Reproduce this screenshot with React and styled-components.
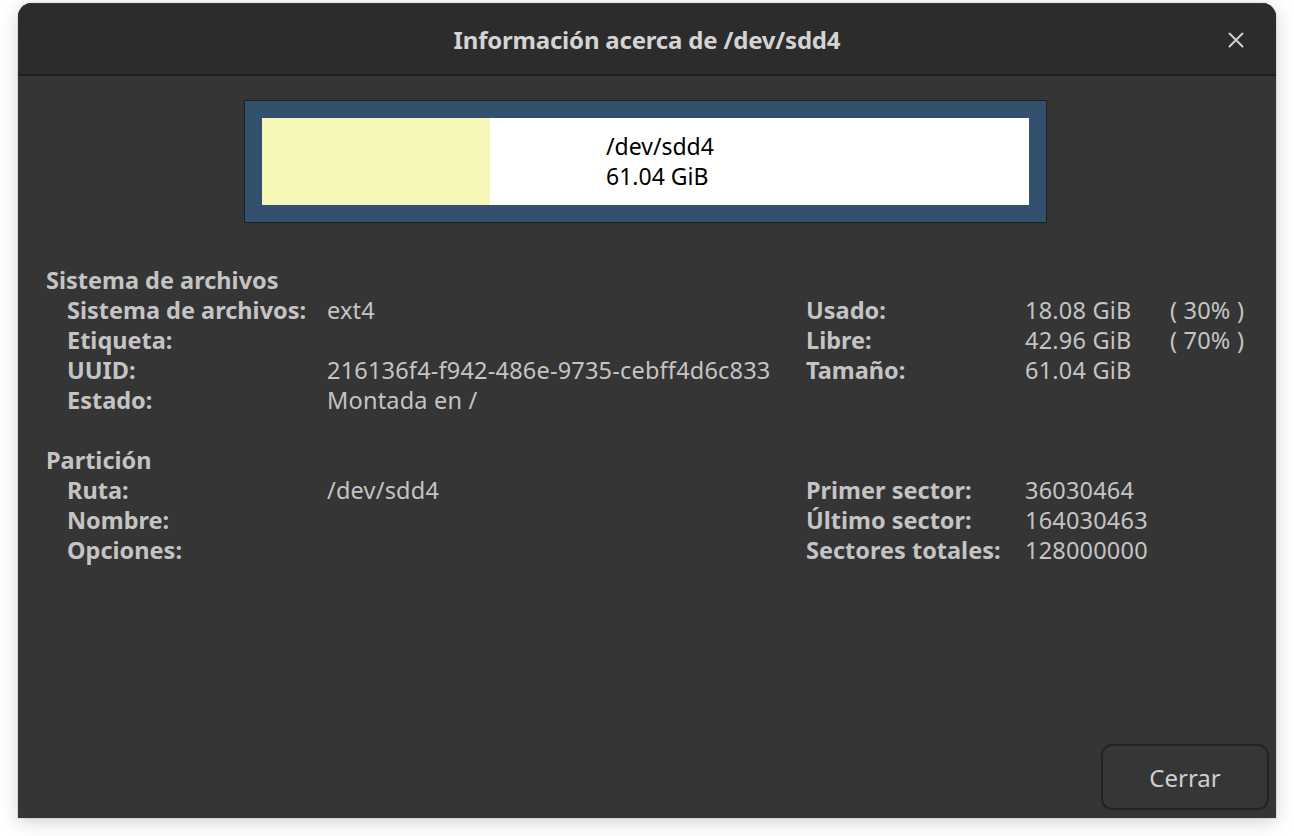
import styled, { createGlobalStyle } from "styled-components"

const Global = createGlobalStyle`
  html, body {
    margin: 0;
    padding: 0;
    background: #ffffff;
  }
  body {
    font-family: "Noto Sans", "Open Sans", sans-serif;
  }
`;

const Page = styled.div`
  width: 1294px;
  height: 836px;
  padding: 3px 18px 0 18px;
  box-sizing: border-box;
`;

const Window = styled.div`
  width: 1258px;
  height: 815px;
  background: #353535;
  border-radius: 14px 14px 0 0;
  box-shadow: 0 4px 18px rgba(0, 0, 0, 0.18), 0 0 0 1px rgba(0, 0, 0, 0.06);
  display: flex;
  flex-direction: column;
  overflow: hidden;
`;

const TitleBar = styled.header`
  flex-shrink: 0;
  background: #2c2c2c;
  border-top: 1px solid #3a3a3a;
  border-bottom: 2px solid #1f1f1f;
  box-sizing: border-box;
  height: 73px;
  display: flex;
  align-items: center;
  justify-content: center;
  position: relative;
`;

const Title = styled.h1`
  margin: 0;
  font-size: 24px;
  font-weight: 700;
  color: #d4d4d4;
  letter-spacing: -0.2px;
`;

const CloseButton = styled.button`
  position: absolute;
  right: 28px;
  top: 24px;
  width: 24px;
  height: 24px;
  padding: 0;
  border: none;
  background: transparent;
  display: flex;
  align-items: center;
  justify-content: center;
`;

const Body = styled.main`
  flex: 1;
  display: flex;
  flex-direction: column;
  padding: 24px 0 8px 0;
`;

const BarFrame = styled.div`
  align-self: center;
  width: 803px;
  height: 123px;
  box-sizing: border-box;
  margin-left: -3px;
  border: 1px solid #1f1f1f;
  background: #33506e;
  padding: 17px;
  display: flex;
`;

const Bar = styled.div`
  flex: 1;
  display: flex;
  background: #ffffff;
  position: relative;
`;

const Used = styled.div`
  width: ${(p) => p.$width}px;
  background: #f7f7b9;
`;

const BarLabel = styled.div`
  position: absolute;
  left: 344px;
  top: 13px;
  color: #000;
  font-family: "Noto Sans", sans-serif;
  font-size: 23px;
  line-height: 30px;
`;

const Section = styled.section`
  margin-top: ${(p) => p.$top}px;
  padding-left: 28px;
`;

const SectionTitle = styled.h2`
  margin: 0;
  font-size: 23.5px;
  font-weight: 700;
  color: #c4c4c4;
  line-height: 30px;
`;

const Grid = styled.div`
  display: grid;
  grid-template-columns: 260px 479px 219px 145px auto;
  padding-left: 21px;
  font-size: 23.5px;
  line-height: 30px;
  color: #c4c4c4;
`;

const Label = styled.div`
  font-weight: 700;
  white-space: nowrap;
`;

const Value = styled.div`
  font-weight: 400;
  white-space: nowrap;
  letter-spacing: 0.2px;
`;

const Footer = styled.div`
  margin-top: auto;
  display: flex;
  justify-content: flex-end;
  padding-right: 7px;
`;

const Button = styled.button`
  width: 168px;
  height: 66px;
  border-radius: 11px;
  border: 2px solid #232323;
  background: #363636;
  color: #cfcfcf;
  font-family: "Noto Sans", sans-serif;
  font-size: 24px;
`;

const fsRows = [
  ["Sistema de archivos:", "ext4", "Usado:", "18.08 GiB", "( 30% )"],
  ["Etiqueta:", "", "Libre:", "42.96 GiB", "( 70% )"],
  ["UUID:", "216136f4-f942-486e-9735-cebff4d6c833", "Tamaño:", "61.04 GiB", ""],
  ["Estado:", "Montada en /", "", "", ""],
];

const partRows = [
  ["Ruta:", "/dev/sdd4", "Primer sector:", "36030464", ""],
  ["Nombre:", "", "Último sector:", "164030463", ""],
  ["Opciones:", "", "Sectores totales:", "128000000", ""],
];

function InfoGrid({ rows }) {
  return (
    <Grid>
      {rows.map((r, i) => [
        <Label key={i + "a"}>{r[0]}</Label>,
        <Value key={i + "b"}>{r[1]}</Value>,
        <Label key={i + "c"}>{r[2]}</Label>,
        <Value key={i + "d"}>{r[3]}</Value>,
        <Value key={i + "e"}>{r[4]}</Value>,
      ])}
    </Grid>
  );
}

export default function App() {
  return (
    <Page>
      <Global />
      <Window>
        <TitleBar>
          <Title>Información acerca de /dev/sdd4</Title>
          <CloseButton type="button" aria-label="Cerrar">
            <svg width="16" height="16" viewBox="0 0 16 16">
              <path d="M1.5 1.5 L14.5 14.5 M14.5 1.5 L1.5 14.5" stroke="#cfcfcf" strokeWidth="2" strokeLinecap="round" />
            </svg>
          </CloseButton>
        </TitleBar>
        <Body>
          <BarFrame>
            <Bar>
              <Used $width={228} />
              <BarLabel>
                /dev/sdd4
                <br />
                61.04 GiB
              </BarLabel>
            </Bar>
          </BarFrame>
          <Section $top={42}>
            <SectionTitle>Sistema de archivos</SectionTitle>
            <InfoGrid rows={fsRows} />
          </Section>
          <Section $top={30}>
            <SectionTitle>Partición</SectionTitle>
            <InfoGrid rows={partRows} />
          </Section>
          <Footer>
            <Button type="button">Cerrar</Button>
          </Footer>
        </Body>
      </Window>
    </Page>
  );
}
